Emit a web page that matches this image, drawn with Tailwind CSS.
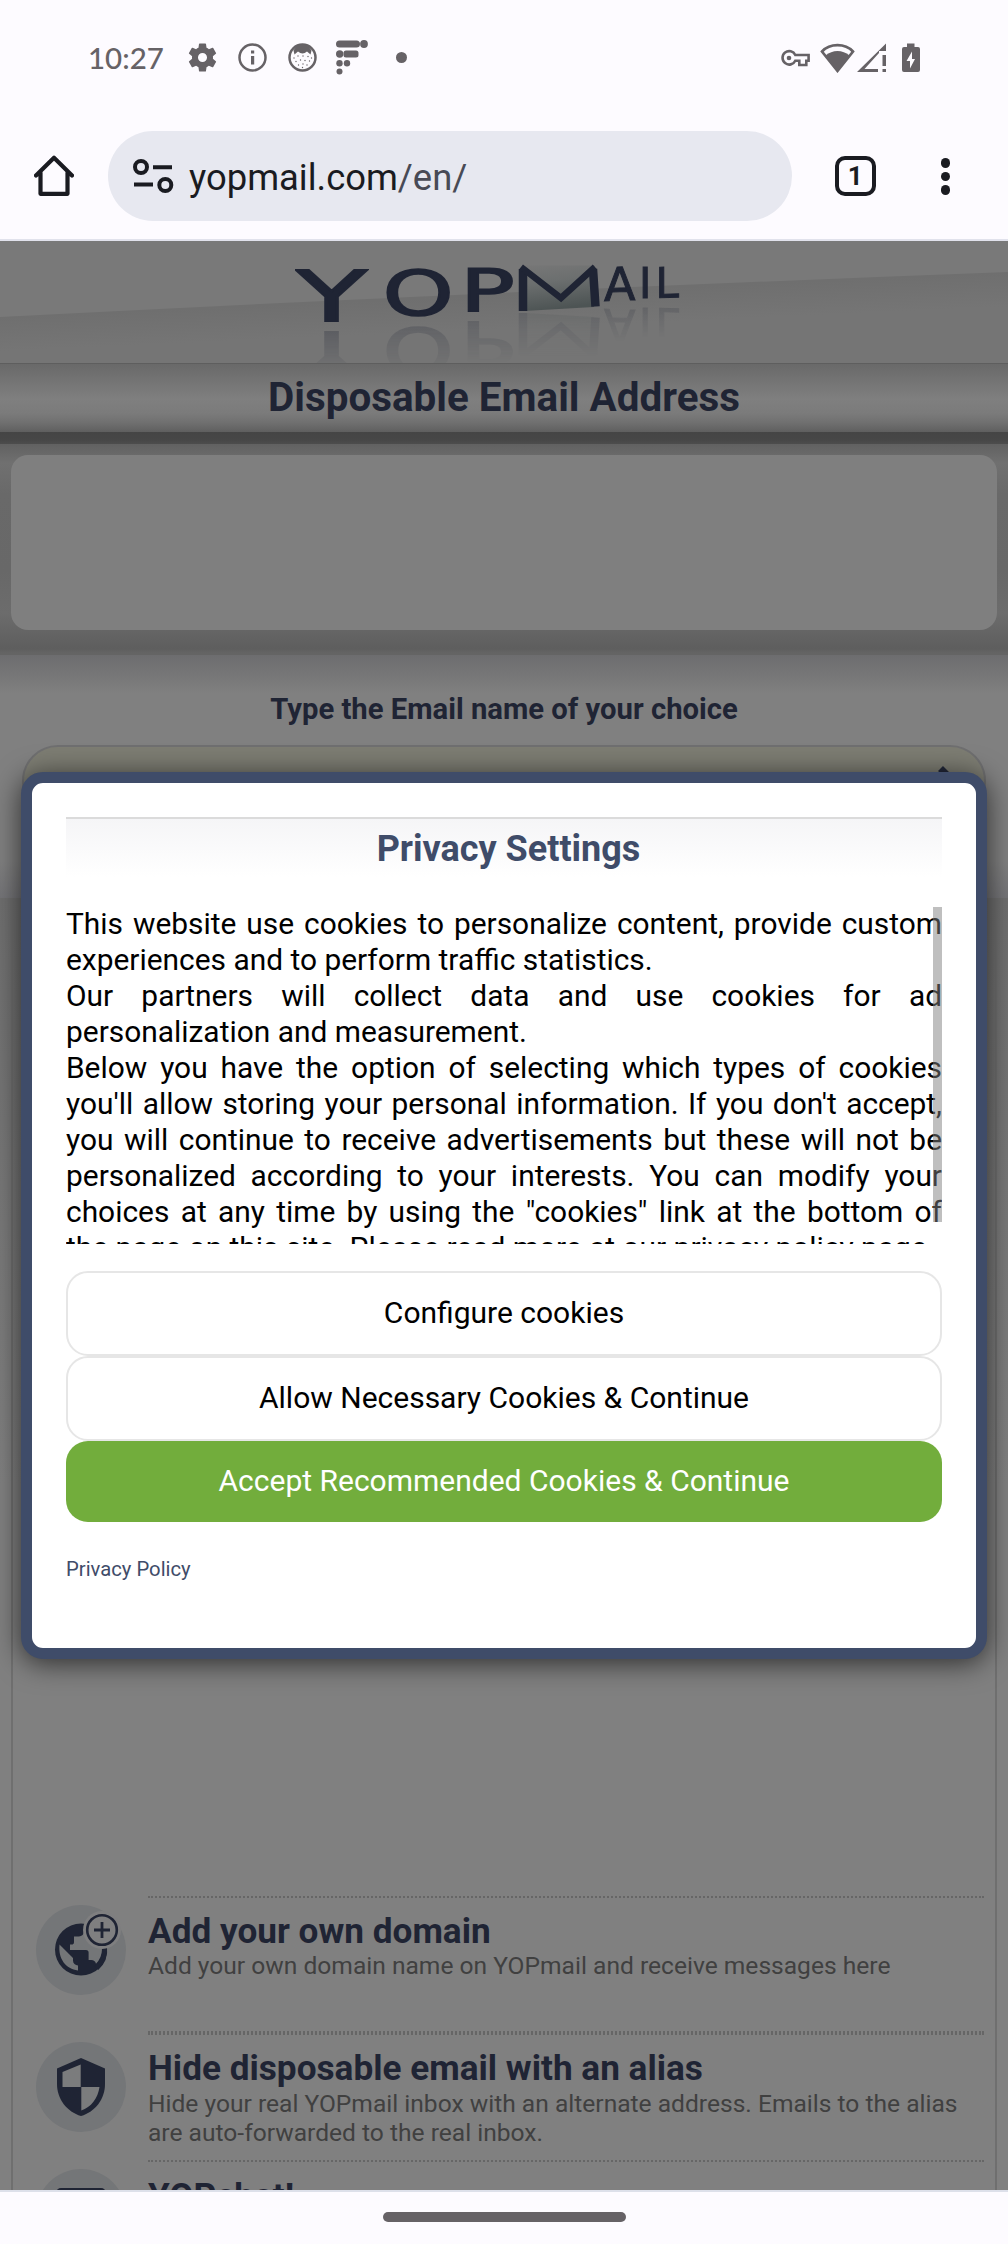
<!DOCTYPE html>
<html lang="en">
<head>
<meta charset="utf-8">
<title>YOPmail - Disposable Email Address</title>
<script src="https://cdn.jsdelivr.net/npm/@tailwindcss/browser@4"></script>
</head>
<body class="bg-[#fdfbff] font-['Roboto',sans-serif]">
<div class="relative flex h-[2244px] w-[1008px] flex-col overflow-hidden">

  <!-- Status bar -->
  <div class="flex h-[115px] shrink-0 items-center pl-[88px] pr-[88px] text-[#666266]">
    <div class="w-[97px] font-['Lato',sans-serif] text-[29.500px] font-medium leading-[36px]">10:27</div>
    <svg class="size-[35px]" viewBox="0 0 24 24" fill="currentColor"><path d="M19.14 12.94c.04-.3.06-.61.06-.94 0-.32-.02-.64-.07-.94l2.03-1.58a.49.49 0 0 0 .12-.61l-1.92-3.32a.49.49 0 0 0-.59-.22l-2.39.96a7 7 0 0 0-1.62-.94l-.36-2.54A.48.48 0 0 0 13.92 2.4h-3.84a.48.48 0 0 0-.48.41l-.36 2.54c-.59.24-1.13.57-1.62.94l-2.39-.96a.49.49 0 0 0-.59.22L2.72 8.87a.49.49 0 0 0 .12.61l2.03 1.58c-.05.3-.07.63-.07.94s.02.64.07.94l-2.03 1.58a.49.49 0 0 0-.12.61l1.92 3.32c.12.22.37.29.59.22l2.39-.96c.5.38 1.03.7 1.62.94l.36 2.54c.05.24.24.41.48.41h3.84c.24 0 .44-.17.47-.41l.36-2.54a7 7 0 0 0 1.62-.94l2.39.96c.22.08.47 0 .59-.22l1.92-3.32a.49.49 0 0 0-.12-.61zM12 15.1a3.1 3.1 0 1 1 0-6.2 3.1 3.1 0 0 1 0 6.2"/></svg>
    <svg class="ml-[18px] size-[29px]" viewBox="0 0 29 29"><circle cx="14.5" cy="14.5" r="13" fill="none" stroke="currentColor" stroke-width="2.5"/><path d="M13 7.5h3.2v3H13zM13 13h3.2v8.500H13z" fill="currentColor"/></svg>
    <svg class="ml-[21px] size-[29px]" viewBox="0 0 29 29"><circle cx="14.500" cy="14.500" r="13" fill="none" stroke="currentColor" stroke-width="2.500"/><path d="M5.500 7.500C8 3 11 1.500 14.500 1.500S21 3 23.500 7.500l-1 4-3.500-3c-3 2.500-6 2.500-9 0l-3.500 3z" fill="currentColor"/><g fill="currentColor"><circle cx="6" cy="15" r=".7"/><circle cx="10" cy="13" r=".7"/><circle cx="15" cy="13" r=".7"/><circle cx="20" cy="13.500" r=".7"/><circle cx="23.500" cy="15" r=".7"/><circle cx="8" cy="18.500" r=".7"/><circle cx="12.500" cy="17" r=".7"/><circle cx="17" cy="17.500" r=".7"/><circle cx="21.500" cy="18" r=".7"/><circle cx="10.500" cy="22" r=".7"/><circle cx="15" cy="21" r=".7"/><circle cx="19" cy="22" r=".7"/><circle cx="14.500" cy="24.500" r=".7"/></g></svg>
    <svg class="ml-[19px] h-[35px] w-[32px]" viewBox="0 0 32 35" fill="currentColor"><rect x="0" y="0.500" width="24" height="7" rx="3.500"/><circle cx="28" cy="4" r="3.900"/><circle cx="3.700" cy="14" r="3.700"/><rect x="7.500" y="10.500" width="15" height="7" rx="2.500"/><circle cx="3.500" cy="23.200" r="3.200"/><circle cx="11" cy="23.200" r="3.200"/><circle cx="3.500" cy="31.500" r="3"/></svg>
    <span class="ml-[28px] size-[11px] rounded-full bg-[#666266]"></span>
    <div class="ml-auto flex items-center">
      <svg class="h-[18px] w-[29px]" viewBox="0 0 29 18" fill="none" stroke="currentColor" stroke-width="2.600"><path d="M14.300 6H27.600v5.700h-2.300v4.300h-7v-4.300h-4A6.700 6.700 0 1 1 14.300 6z"/><circle cx="8" cy="9" r="2.300" fill="currentColor" stroke="none"/></svg>
      <svg class="ml-[10px] h-[30px] w-[35px]" viewBox="0 0 35 30"><path d="M2 8.500C10 0 25 0 33 8.500L17.500 28z" fill="none" stroke="currentColor" stroke-width="2.600"/><path d="M5.500 12.500c7-6 17-6 24 0L17.500 28.500z" fill="currentColor"/></svg>
      <svg class="ml-[2px] h-[30px] w-[30px]" viewBox="0 0 30 30" fill="currentColor"><path d="M0 29 29 .500V8H22v2L7.500 26H21v3z"/><path d="M25.500 12h3.500v11h-3.500zM25.500 26h3.500v3h-3.500z"/></svg>
      <svg class="ml-[15px] h-[30px] w-[18px]" viewBox="0 0 18 30"><path d="M5 .500h7.500V4H16a2 2 0 0 1 2 2v21a2 2 0 0 1-2 2H2a2 2 0 0 1-2-2V6a2 2 0 0 1 2-2h3z" fill="currentColor"/><path d="M10 8.500 4.500 18H8v7.500L13 16H10z" fill="#fdfbff"/></svg>
    </div>
  </div>

  <!-- Browser toolbar -->
  <div class="flex h-[126px] shrink-0 items-start border-b-2 border-[#e1e2ec] pl-[34px] pt-[16px] text-[#1a1b21]">
    <svg class="mt-[24px] h-[42px] w-[40px]" viewBox="0 0 40 42" fill="none" stroke="currentColor" stroke-width="4.200" stroke-linejoin="round" stroke-linecap="round"><path d="M2 20.500 20 2.800 38 20.500M6.500 17.500V38.800h27V17.500"/></svg>
    <div class="ml-[34px] flex h-[90px] w-[684px] rounded-full bg-[#e7e8f0] pl-[25px]">
      <svg class="mt-[28px] h-[34px] w-[41px]" viewBox="0 0 41 34" fill="none" stroke="currentColor" stroke-width="4"><circle cx="8" cy="8" r="6"/><circle cx="32.300" cy="26" r="6"/><path d="M20 8.200h19M1 25.600h19"/></svg>
      <span class="ml-[15px] mt-[25px] text-[36.400px] leading-[43px]">yopmail.com<span class="text-[#484a55]">/en/</span></span>
    </div>
    <div class="ml-[43px] mt-[24.500px] flex size-[40.500px] items-center justify-center rounded-[10px] border-4 border-[#1a1b21] text-[26px] font-bold leading-none">1</div>
    <div class="ml-[65px] mt-[27px] flex flex-col gap-[4px]">
      <span class="size-[9.500px] rounded-full bg-[#1a1b21]"></span>
      <span class="size-[9.500px] rounded-full bg-[#1a1b21]"></span>
      <span class="size-[9.500px] rounded-full bg-[#1a1b21]"></span>
    </div>
  </div>

  <!-- Web page, dimmed behind the dialog -->
  <div class="relative flex h-[1949px] shrink-0 flex-col overflow-hidden bg-[#808080] text-[#1f2434]">

    <div class="relative h-[122px] shrink-0 overflow-hidden">
      <svg class="absolute inset-0 h-[122px] w-full" viewBox="0 0 1008 122">
        <defs>
          <linearGradient id="slope" gradientUnits="userSpaceOnUse" x1="500" y1="54" x2="501.500" y2="88"><stop offset="0" stop-color="#6f6f6f"/><stop offset="1" stop-color="#757575"/></linearGradient>
          <linearGradient id="env" x1="0" y1="0" x2=".2" y2="1"><stop offset="0" stop-color="#777"/><stop offset=".4" stop-color="#6c6f6f"/><stop offset="1" stop-color="#4d5454"/></linearGradient>
        </defs>
        <rect width="1008" height="122" fill="#797979"/>
        <path d="M0 76Q500 50 1008 31V122H0z" fill="url(#slope)"/>
      </svg>
      <!-- Logo letters, each mirrored on the glossy floor -->
      <div class="relative flex items-start pl-[295px] font-['DejaVu_Sans',sans-serif]">
        <svg class="mt-[27px] h-[54px] w-[74px] shrink-0 [-webkit-box-reflect:below_9px_linear-gradient(transparent_20%,rgb(0_0_0/0.28))]" viewBox="0 0 74 54" fill="#1f2434" stroke="#1f2434"><text stroke-width="2" font-size="70" transform="translate(1.500 53) scale(1.640 1)">Y</text></svg>
        <svg class="ml-[16px] mt-[25px] h-[52px] w-[66px] shrink-0 [-webkit-box-reflect:below_7px_linear-gradient(transparent_10%,rgb(0_0_0/0.22))]" viewBox="0 0 66 52" fill="#1f2434" stroke="#1f2434"><text stroke-width="1.600" font-size="63" transform="translate(-2.500 49) scale(1.440 1)">O</text></svg>
        <svg class="ml-[13px] mt-[25px] h-[46px] w-[50px] shrink-0 [-webkit-box-reflect:below_9px_linear-gradient(transparent_10%,rgb(0_0_0/0.2))]" viewBox="0 0 50 46" fill="#1f2434" stroke="#1f2434"><text stroke-width="1.600" font-size="59" transform="translate(-4 44.500) scale(1.540 1)">P</text></svg>
        <svg class="ml-[4px] mt-[22px] h-[48px] w-[82px] shrink-0 [-webkit-box-reflect:below_2px_linear-gradient(transparent_10%,rgb(0_0_0/0.18))]" viewBox="518 22 82 48" fill="none" stroke="#1f2434">
          <path d="M524 24.500H595L594 66 524 70z" fill="url(#env)" stroke="none"/>
          <path d="M523 70V28M595.500 65.500 593 28" stroke-width="8.500"/>
          <path d="M521 26 561 57 595 26" stroke-width="6.500"/>
        </svg>
        <svg class="ml-[3px] mt-[24px] h-[37px] w-[34px] shrink-0 [-webkit-box-reflect:below_6px_linear-gradient(transparent_10%,rgb(0_0_0/0.18))]" viewBox="0 0 34 37" fill="#1f2434" stroke="#1f2434"><text stroke-width="1" font-size="46" transform="translate(1 36) skewY(-2)">A</text></svg>
        <svg class="ml-[3px] mt-[24px] h-[34px] w-[12px] shrink-0 [-webkit-box-reflect:below_8px_linear-gradient(transparent_10%,rgb(0_0_0/0.18))]" viewBox="0 0 12 34" fill="#1f2434" stroke="#1f2434"><text stroke-width="1" font-size="42" transform="translate(-1 33)">I</text></svg>
        <svg class="ml-[5px] mt-[24px] h-[34px] w-[24px] shrink-0 [-webkit-box-reflect:below_8px_linear-gradient(transparent_10%,rgb(0_0_0/0.18))]" viewBox="0 0 24 34" fill="#1f2434" stroke="#1f2434"><text stroke-width="1" font-size="42" transform="translate(-1.500 33) skewY(-2)">L</text></svg>
      </div>
    </div>

    <h1 class="h-[69px] shrink-0 border-t border-[#5e5e5e] bg-[linear-gradient(#696969,#747474_25%,#7f7f7f_52%,#7b7b7b_72%,#707070_86%,#5f5f5f)] pt-[10px] text-center text-[40.400px] font-bold leading-[48px]">Disposable Email Address</h1>
    <div class="h-[12px] shrink-0 bg-[linear-gradient(#454545,#474747_70%,#4d4d4d)]"></div>

    <div class="h-[211px] shrink-0 bg-[linear-gradient(#616161,#707070_9%,#696969_24%,#686868_60%,#6c6c6c_80%,#5e5e5e_97%,#646464_99%,#646464)] px-[11px] pt-[11px]">
      <div class="h-[175px] rounded-[17px] bg-[#7f7f7f]"></div>
    </div>

    <div class="h-[243px] shrink-0 bg-[linear-gradient(#6d6d6f,#767677_8%,#808080_16%,#808080_85%,#757578)] px-[22px] pt-[36px]">
      <div class="text-center text-[29.240px] font-bold leading-[36px]">Type the Email name of your choice</div>
      <div class="mt-[18px] flex h-[74px] justify-end rounded-[36px] border-2 border-[#6f6f70] bg-[#7d7d73] pr-[24px] pt-[17px]">
        <svg class="size-[40px]" viewBox="0 0 40 40" fill="none" stroke="#23283a" stroke-width="7"><path d="M20.500 4.500 36 20 20.500 35.500M4 20h32"/></svg>
      </div>
    </div>

    <div class="flex grow flex-col bg-[linear-gradient(#6f6f6f,#787878_22%,#808080_45%)] px-[11px]">
      <div class="flex grow flex-col border-x-2 border-[#6f6f6f] pt-[998px]">
        <div class="flex h-[137px] shrink-0 pl-[23px] pr-[11px]">
          <div class="mt-[9px] flex size-[90px] shrink-0 items-center justify-center rounded-full bg-[#747678]">
            <svg class="size-[90px] overflow-visible" viewBox="0 0 90 90">
              <circle cx="45" cy="44.500" r="26" fill="#1f2434"/>
              <path d="M23.500 39.500 37 53v2.500a5 5 0 0 0 5 5v5C30 64 22 54 23.500 39.500zM48 20v6.500a5 5 0 0 1-5 5H38V37a2.600 2.600 0 0 1-2.600 2.600H34V45h16a2.600 2.600 0 0 1 2.600 2.600V55H55a5 5 0 0 1 5 3.700A21 21 0 0 0 66 44.500L60 30z" fill="#747678"/>
              <path d="M68.500 42a24 24 0 0 1-8 21" fill="none" stroke="#1f2434" stroke-width="5"/>
              <circle cx="66" cy="25" r="19" fill="#7f7f80"/>
              <circle cx="66" cy="25" r="14.800" fill="none" stroke="#1f2434" stroke-width="2.600"/>
              <path d="M58 25h16M66 17v16" stroke="#1f2434" stroke-width="2.800"/>
            </svg>
          </div>
          <div class="ml-[22px] grow border-y-2 border-dotted border-[#666] pt-[12px]">
            <h2 class="text-[35.180px] font-bold leading-[42px]">Add your own domain</h2>
            <p class="text-[24.580px] leading-[28.700px] text-[#404040]">Add your own domain name on YOPmail and receive messages here</p>
          </div>
        </div>
        <div class="flex h-[129px] shrink-0 pl-[23px] pr-[11px]">
          <div class="mt-[9px] flex size-[90px] shrink-0 items-center justify-center rounded-full bg-[#747678]">
            <svg class="h-[58px] w-[48px]" viewBox="0 0 48 58"><path d="M24 0 48 10.500V26C48 41 38 54 24 58 10 54 0 41 0 26V10.500z" fill="#1f2434"/><path d="M23.700 6.500V29H5.500V14zM24.300 29H42.500C41 40 34 49.500 24.300 52.500z" fill="#7b7c7d"/></svg>
          </div>
          <div class="ml-[22px] grow border-y-2 border-dotted border-[#666] pt-[12px]">
            <h2 class="text-[35.180px] font-bold leading-[42px]">Hide disposable email with an alias</h2>
            <p class="whitespace-nowrap text-[24.580px] leading-[29px] text-[#404040]">Hide your real YOPmail inbox with an alternate address. Emails to the alias<br>are auto-forwarded to the real inbox.</p>
          </div>
        </div>
        <div class="flex h-[40px] shrink-0 pl-[23px] pr-[11px]">
          <div class="mt-[7px] flex size-[90px] shrink-0 justify-center rounded-full bg-[#747678] pt-[19px]">
            <svg class="h-[50px] w-[50px]" viewBox="0 0 50 50"><rect width="50" height="40" rx="5" fill="#1f2434"/></svg>
          </div>
          <div class="ml-[22px] grow pt-[13px]">
            <h2 class="text-[35.180px] font-bold leading-[42px]">YOPchat!</h2>
          </div>
        </div>
      </div>
    </div>

    <!-- Consent dialog -->
    <div class="absolute left-[21px] top-[531px] flex h-[887px] w-[966px] flex-col rounded-[22px] border-[11px] border-[#3f4c69] bg-white px-[34px] pt-[34px] text-black shadow-[0_4px_28px_rgba(0,0,0,0.65)]">
      <h2 class="h-[60px] border-t-2 border-[#dbdbdb] bg-[linear-gradient(#f5f5f7,#ffffff)] pl-[9px] pt-[8px] text-center text-[36px] font-bold leading-[44px] text-[#3f4c69]">Privacy Settings</h2>
      <div class="relative mt-[29px] h-[338px] overflow-hidden text-justify text-[29.900px] leading-[36px]">
        <p>This website use cookies to personalize content, provide custom experiences and to perform traffic statistics.</p>
        <p>Our partners will collect data and use cookies for ad personalization and measurement.</p>
        <p>Below you have the option of selecting which types of cookies you'll allow storing your personal information. If you don't accept, you will continue to receive advertisements but these will not be personalized according to your interests. You can modify your choices at any time by using the "cookies" link at the bottom of the page on this site. Please read more at our privacy policy page.</p>
        <span class="absolute right-0 top-[1px] h-[315px] w-[9px] bg-[#808080]/50"></span>
      </div>
      <div class="mt-[27px] flex flex-col text-center text-[30px] leading-[36px]">
        <button class="h-[85px] rounded-[22px] border-2 border-[#e6e6e6] bg-white pb-[1px]">Configure cookies</button>
        <button class="h-[85px] rounded-[22px] border-2 border-[#e6e6e6] bg-white pb-[1px]">Allow Necessary Cookies &amp; Continue</button>
        <button class="h-[81px] rounded-[22px] bg-[#72ad3c] pb-[1px] text-white">Accept Recommended Cookies &amp; Continue</button>
      </div>
      <a class="mt-[35px] text-[20.250px] leading-[24px] text-[#3f4c69]">Privacy Policy</a>
    </div>
  </div>

  <!-- Gesture bar -->
  <div class="flex grow justify-center border-t-2 border-[#dde0ea] pt-[20px]">
    <span class="h-[9.500px] w-[243px] rounded-full bg-[#666266]"></span>
  </div>
</div>
</body>
</html>
